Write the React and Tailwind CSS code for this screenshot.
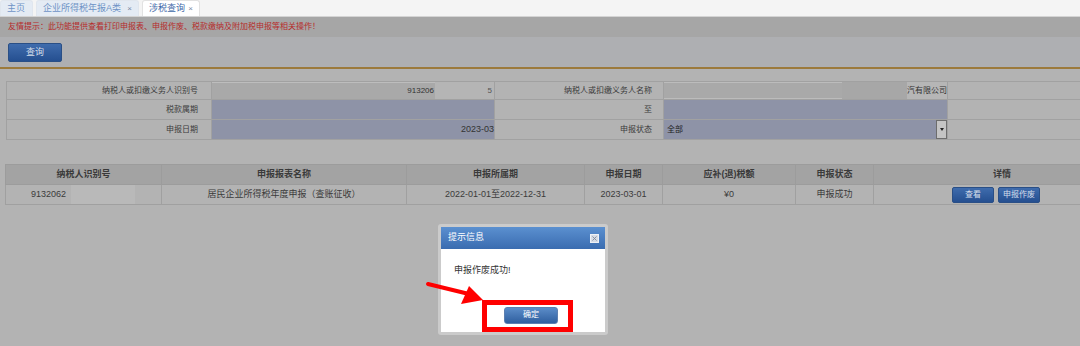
import { X } from 'lucide-react'

const FONT = "font-['Liberation_Sans','Noto_Sans_CJK_SC',sans-serif]"

function Tab({ label, active, closable, w }) {
  return (
    <div
      className={`${w} h-[16px] flex items-center justify-between px-[6px] whitespace-nowrap rounded-t-[3px] border border-b-0 ${
        active ? 'bg-white border-[#e2e2e2] text-[#3f6aa9]' : 'bg-[#e4ebf4] border-[#e0e6ee] text-[#6f93c6]'
      }`}
    >
      <span className="text-[9px] leading-none">{label}</span>
      {closable && <span className="text-[8px] leading-none text-[#7a8aa6]">×</span>}
    </div>
  )
}

const resultCols = [
  { name: '纳税人识别号', w: 'w-[156px]' },
  { name: '申报报表名称', w: 'w-[245px]' },
  { name: '申报所属期', w: 'w-[178px]' },
  { name: '申报日期', w: 'w-[78px]' },
  { name: '应补(退)税额', w: 'w-[133px]' },
  { name: '申报状态', w: 'w-[78px]' },
  { name: '详情', w: 'w-[257px]' },
]

function BlueBtn({ children, className }) {
  return (
    <div
      className={`flex items-center justify-center rounded-[2px] bg-gradient-to-b from-[#3f6cad] to-[#254f90] border border-[#2a4f86] text-[#d5deea] text-[8px] leading-none ${className}`}
    >
      {children}
    </div>
  )
}

export default function App() {
  return (
    <div className={`${FONT} relative w-[1080px] h-[346px] overflow-hidden bg-[#b3b3b3] text-[#3b3b3b]`}>
      {/* tab bar */}
      <div className="h-[17px] bg-[#f4f4f4] border-b border-[#d4d4d4] flex items-end gap-[3px]">
        <Tab label="主页" w="w-[33px]" />
        <Tab label="企业所得税年报A类" closable w="w-[103px]" />
        <Tab label="涉税查询" closable active w="w-[58px]" />
      </div>

      {/* tip */}
      <div className="h-[20px] bg-[#a6a6a6] flex items-center px-[8px] text-[8px] text-[#b62a2a]">
        友情提示：此功能提供查看打印申报表、申报作废、税款缴纳及附加税申报等相关操作！
      </div>

      {/* query bar */}
      <div className="h-[32px] bg-[#aeafb2] border-b-2 border-[#9c7a3c] pt-[6px] pl-[8px]">
        <BlueBtn className="w-[54px] h-[19px] text-[9px]">查询</BlueBtn>
      </div>

      {/* form */}
      <div className="pt-[12px] pl-[6px]">
        <table className="table-fixed border-collapse w-[1110px] text-[8px]">
          <colgroup>
            <col className="w-[205px]" />
            <col className="w-[283px]" />
            <col className="w-[169px]" />
            <col className="w-[284px]" />
            <col />
          </colgroup>
          <tbody>
            <tr className="h-[18px]">
              <td className="border border-[#a1a1a1] text-right pr-[13px]">纳税人或扣缴义务人识别号</td>
              <td className="border border-[#a1a1a1] p-0">
                <div className="flex h-[17px]">
                  <div className="flex-1 bg-[#a9a9a9] border-t border-[#bdbdbd] text-right pr-[1px] leading-[16px] text-[#333]">913206</div>
                  <div className="w-[59px] bg-[#b5b5b5] text-right pr-[2px] leading-[17px] text-[#555]">5</div>
                </div>
              </td>
              <td className="border border-[#a1a1a1] text-right pr-[11px]">纳税人或扣缴义务人名称</td>
              <td className="border border-[#a1a1a1] p-0">
                <div className="flex h-[17px]">
                  <div className="w-[179px] bg-[#a9a9a9] border-y border-[#bcbcbc]" />
                  <div className="w-[65px] bg-[#a7a7a7]" />
                  <div className="flex-1 bg-[#b6b6b6] text-right leading-[17px] text-[#333] whitespace-nowrap">汽有限公司</div>
                </div>
              </td>
              <td className="border border-[#a1a1a1]" />
            </tr>
            <tr className="h-[20px]">
              <td className="border border-[#a1a1a1] text-right pr-[13px]">税款属期</td>
              <td className="border border-[#a1a1a1] bg-[#8e93a7]" />
              <td className="border border-[#a1a1a1] text-right pr-[11px]">至</td>
              <td className="border border-[#a1a1a1] bg-[#8e93a7]" />
              <td className="border border-[#a1a1a1]" />
            </tr>
            <tr className="h-[20px]">
              <td className="border border-[#a1a1a1] text-right pr-[13px]">申报日期</td>
              <td className="border border-[#a1a1a1] bg-[#8e93a7] text-right pr-0 text-[9px] text-[#333]">2023-03</td>
              <td className="border border-[#a1a1a1] text-right pr-[11px]">申报状态</td>
              <td className="border border-[#a1a1a1] bg-[#8e93a7] p-0">
                <div className="flex items-center justify-between h-[19px] pl-[3px] text-[#222]">
                  <span>全部</span>
                  <div className="w-[11px] h-[19px] bg-[#c4c4c4] border border-[#6d6d6d] flex items-center justify-center">
                    <div className="w-0 h-0 border-x-[2px] border-x-transparent border-t-[3px] border-t-[#222]" />
                  </div>
                </div>
              </td>
              <td className="border border-[#a1a1a1]" />
            </tr>
          </tbody>
        </table>
      </div>

      {/* results */}
      <div className="pt-[24px] pl-[5px]">
        <table className="table-fixed border-collapse w-[1125px] text-[9px]">
          <colgroup>
            {resultCols.map((c) => (
              <col key={c.name} className={c.w} />
            ))}
          </colgroup>
          <thead>
            <tr className="h-[20px] bg-[#a3a3a3]">
              {resultCols.map((c) => (
                <th key={c.name} className="border border-[#9c9c9c] font-bold text-[#3a3a3a] text-center">
                  {c.name}
                </th>
              ))}
            </tr>
          </thead>
          <tbody>
            <tr className="h-[20px] text-center">
              <td className="border border-[#a0a0a0] p-0">
                <div className="flex h-[19px] items-center">
                  <span className="pl-[25px] w-[65px] text-left">9132062</span>
                  <div className="w-[64px] h-[19px] bg-[#b9b9b9]" />
                </div>
              </td>
              <td className="border border-[#a0a0a0]">居民企业所得税年度申报（查账征收）</td>
              <td className="border border-[#a0a0a0]">2022-01-01至2022-12-31</td>
              <td className="border border-[#a0a0a0]">2023-03-01</td>
              <td className="border border-[#a0a0a0]">¥0</td>
              <td className="border border-[#a0a0a0]">申报成功</td>
              <td className="border border-[#a0a0a0] p-0">
                <div className="flex gap-[4px] pl-[78px] items-center">
                  <BlueBtn className="w-[42px] h-[16px]">查看</BlueBtn>
                  <BlueBtn className="w-[42px] h-[16px]">申报作废</BlueBtn>
                </div>
              </td>
            </tr>
          </tbody>
        </table>
      </div>

      {/* modal */}
      <div className="absolute left-[438px] top-[224px] w-[170px] h-[111px] rounded-[3px] bg-[#cbcbcb] p-[3px] pr-[3px]">
        <div className="bg-white h-full flex flex-col">
          <div className="h-[22px] bg-gradient-to-b from-[#5b90d0] to-[#3a6cb0] flex items-center justify-between pl-[7px] pr-[6px]">
            <span className="text-white text-[9px]">提示信息</span>
            <div className="w-[9px] h-[9px] bg-[#d6dce6] border border-[#eef1f6] flex items-center justify-center">
              <X size={7} strokeWidth={3} className="text-[#7d8797]" />
            </div>
          </div>
          <div className="flex-1 flex flex-col items-center">
            <div className="self-start pl-[13px] pt-[15px] text-[9px] text-[#333]">申报作废成功!</div>
            <div className="mt-[29px] flex justify-center pl-[16px]">
              <div className="w-[54px] h-[17px] rounded-[3px] bg-gradient-to-b from-[#5b8cc8] to-[#2f5f9f] border border-[#5c7fb0] text-white text-[8px] flex items-center justify-center">
                确定
              </div>
            </div>
          </div>
        </div>
      </div>

      {/* annotation */}
      <div className="absolute left-[482px] top-[300px] w-[91px] h-[32px] border-[5px] border-[#ff0000]" />
      <svg className="absolute left-[425px] top-[280px]" width="62" height="26" viewBox="0 0 62 26">
        <line x1="3" y1="4" x2="44" y2="14" stroke="#ff0000" strokeWidth="4" strokeLinecap="round" />
        <polygon points="58,20 36,24 44,6" fill="#ff0000" />
      </svg>
    </div>
  )
}
